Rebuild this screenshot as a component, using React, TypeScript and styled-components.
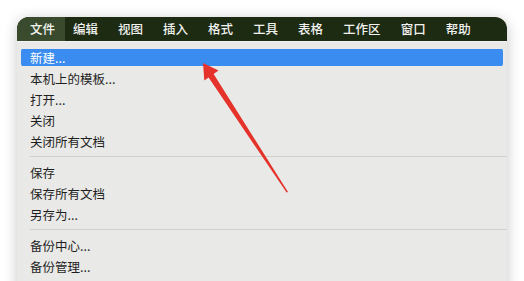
import styled, { createGlobalStyle } from 'styled-components'

const GlobalStyle = createGlobalStyle`
	html, body {
		margin: 0;
		padding: 0;
		background: #ffffff;
		overflow: hidden;
	}
	body {
		font-family: 'Noto Sans CJK SC', 'Noto Sans', sans-serif;
	}
`

const Page = styled.div`
	position: relative;
	width: 524px;
	height: 281px;
	padding: 17px 17px 0 17px;
	box-sizing: border-box;
	overflow: hidden;
`

const Window = styled.div`
	width: 490px;
	height: 300px;
	border-radius: 12px 12px 0 0;
	overflow: hidden;
	background: #e9e9e7;
	box-shadow: 0 2px 14px rgba(0, 0, 0, 0.22);
`

const MenuBar = styled.div`
	display: flex;
	height: 24px;
	background: #1d2b13;
`

const BarItem = styled.div<{ $active?: boolean; $first?: boolean }>`
	display: flex;
	align-items: center;
	padding: 0 10px 0 ${(p) => (p.$first ? '13px' : '10px')};
	margin-right: ${(p) => (p.$first ? '-2px' : '0')};
	background: ${(p) => (p.$active ? '#3a4b2d' : 'transparent')};
	color: #f2f2f0;
	font-size: 12.5px;
	font-weight: 500;
	line-height: 24px;
`

const Menu = styled.div`
	display: flex;
	flex-direction: column;
	padding-top: 5px;
	border-top: 1px solid #f2f3f4;
`

const Item = styled.div<{ $selected?: boolean }>`
	height: 21px;
	padding: 2px 4px;
	box-sizing: border-box;
	background-clip: content-box;
	background-color: ${(p) => (p.$selected ? '#3b8cf1' : 'transparent')};
	border-radius: 5px;
	display: flex;
	align-items: center;
`

const Label = styled.span<{ $selected?: boolean }>`
	padding-left: 9px;
	color: ${(p) => (p.$selected ? '#ffffff' : '#1f1f1f')};
	font-size: 12.5px;
	line-height: 17px;
`

const Separator = styled.div`
	height: 1px;
	margin: 4px 0 5px 13px;
	background: #cfcfcd;
`

const Arrow = styled.svg`
	position: absolute;
	left: 0;
	top: 0;
	pointer-events: none;
`

const barItems = ['文件', '编辑', '视图', '插入', '格式', '工具', '表格', '工作区', '窗口', '帮助']

const groups = [
	['新建...', '本机上的模板...', '打开...', '关闭', '关闭所有文档'],
	['保存', '保存所有文档', '另存为...'],
	['备份中心...', '备份管理...'],
]

const App = () => {
	return (
		<>
			<GlobalStyle />
			<Page>
				<Window>
					<MenuBar>
						{barItems.map((name, i) => (
							<BarItem key={name} $first={i === 0} $active={i === 0}>
								{name}
							</BarItem>
						))}
					</MenuBar>
					<Menu>
						{groups.map((group, gi) => (
							<div key={gi}>
								{group.map((label) => {
									const selected = label === '新建...'
									return (
										<Item key={label} $selected={selected}>
											<Label $selected={selected}>{label}</Label>
										</Item>
									)
								})}
								<Separator />
							</div>
						))}
					</Menu>
				</Window>
				<Arrow width='524' height='281' viewBox='0 0 524 281'>
					<polygon
						points='203,63 218.5,70.5 213.6,74 288,192 286.6,192.6 208.6,77.4 204.3,80.5'
						fill='#e5322b'
					/>
				</Arrow>
			</Page>
		</>
	)
}

export default App
